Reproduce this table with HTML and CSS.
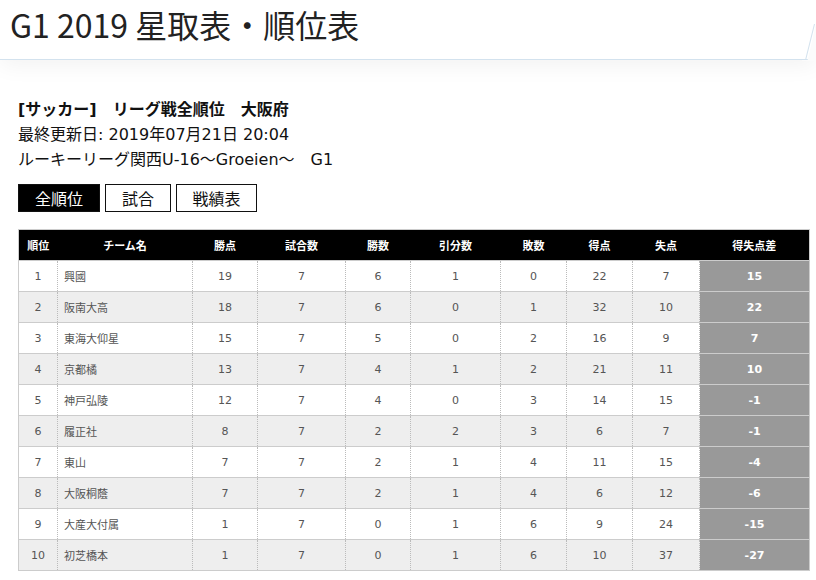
FILE: index.html
```html
<!DOCTYPE html>
<html lang="ja">
<head>
<meta charset="utf-8">
<title>G1 2019 星取表・順位表</title>
<link rel="stylesheet" href="styles.css">
</head>
<body>
<header class="page-header">
  <h1 class="page-title">G1 2019 星取表・順位表</h1>
  <svg class="header-slant" width="14" height="61" viewBox="0 0 14 61" aria-hidden="true">
    <polygon points="14,24 14,61 0,61 0,60 5.7,60" fill="#fbfbfb"/>
    <line x1="3.7" y1="59.5" x2="12.5" y2="24" stroke="#d3e2ee" stroke-width="1"/>
  </svg>
</header>
<main class="content">
  <div class="info">
    <p class="info-title">[サッカー]　リーグ戦全順位　大阪府</p>
    <p class="info-line">最終更新日: 2019年07月21日 20:04</p>
    <p class="info-line">ルーキーリーグ関西U-16～Groeien～　G1</p>
  </div>
  <nav class="tabs">
    <a class="tab tab-active">全順位</a>
    <a class="tab tab-game">試合</a>
    <a class="tab tab-record">戦績表</a>
  </nav>
  <table class="standings">
    <colgroup>
      <col class="c-rank"><col class="c-team"><col class="c-pts"><col class="c-games"><col class="c-win"><col class="c-draw"><col class="c-lose"><col class="c-gf"><col class="c-ga"><col class="c-gd">
    </colgroup>
    <thead>
      <tr><th>順位</th><th>チーム名</th><th>勝点</th><th>試合数</th><th>勝数</th><th>引分数</th><th>敗数</th><th>得点</th><th>失点</th><th>得失点差</th></tr>
    </thead>
    <tbody>
      <tr><td>1</td><td class="team">興國</td><td>19</td><td>7</td><td>6</td><td>1</td><td>0</td><td>22</td><td>7</td><td class="gd">15</td></tr>
      <tr><td>2</td><td class="team">阪南大高</td><td>18</td><td>7</td><td>6</td><td>0</td><td>1</td><td>32</td><td>10</td><td class="gd">22</td></tr>
      <tr><td>3</td><td class="team">東海大仰星</td><td>15</td><td>7</td><td>5</td><td>0</td><td>2</td><td>16</td><td>9</td><td class="gd">7</td></tr>
      <tr><td>4</td><td class="team">京都橘</td><td>13</td><td>7</td><td>4</td><td>1</td><td>2</td><td>21</td><td>11</td><td class="gd">10</td></tr>
      <tr><td>5</td><td class="team">神戸弘陵</td><td>12</td><td>7</td><td>4</td><td>0</td><td>3</td><td>14</td><td>15</td><td class="gd">-1</td></tr>
      <tr><td>6</td><td class="team">履正社</td><td>8</td><td>7</td><td>2</td><td>2</td><td>3</td><td>6</td><td>7</td><td class="gd">-1</td></tr>
      <tr><td>7</td><td class="team">東山</td><td>7</td><td>7</td><td>2</td><td>1</td><td>4</td><td>11</td><td>15</td><td class="gd">-4</td></tr>
      <tr><td>8</td><td class="team">大阪桐蔭</td><td>7</td><td>7</td><td>2</td><td>1</td><td>4</td><td>6</td><td>12</td><td class="gd">-6</td></tr>
      <tr><td>9</td><td class="team">大産大付属</td><td>1</td><td>7</td><td>0</td><td>1</td><td>6</td><td>9</td><td>24</td><td class="gd">-15</td></tr>
      <tr><td>10</td><td class="team">初芝橋本</td><td>1</td><td>7</td><td>0</td><td>1</td><td>6</td><td>10</td><td>37</td><td class="gd">-27</td></tr>
    </tbody>
  </table>
</main>
</body>
</html>
```
FILE: styles.css
```css
* { box-sizing: border-box; }
html, body {
  margin: 0;
  padding: 0;
  background: #ffffff;
  font-family: "Noto Sans CJK JP", "Noto Sans", sans-serif;
  color: #222;
}
.page-header {
  position: relative;
  height: 60px;
  background: #ffffff;
  border-bottom: 1px solid #d3e2ee;
  box-shadow: 0 6px 22px rgba(0, 0, 0, 0.05);
  padding: 0 10px;
  display: flex;
  align-items: center;
}
.page-title {
  margin: 0;
  font-size: 32px;
  font-weight: 400;
  color: #222;
  line-height: 1;
  padding-bottom: 12px;
}
.header-slant {
  position: absolute;
  right: 0;
  top: 0;
}
.content {
  padding: 37px 7px 0 18px;
}
.info p {
  margin: 0;
  font-family: "DejaVu Sans", "Noto Sans CJK JP", sans-serif;
  font-size: 16px;
  line-height: 25px;
  color: #111;
}
.info .info-title {
  font-weight: 700;
}
.tabs {
  display: flex;
  gap: 5px;
  margin-top: 12px;
}
.tab {
  display: flex;
  align-items: center;
  justify-content: center;
  height: 28px;
  font-size: 16px;
  color: #111;
  border: 1px solid #111;
  background: #fff;
}
.tab-active { width: 82px; background: #000; color: #fff; }
.tab-game { width: 66px; }
.tab-record { width: 81px; }
.standings {
  margin-top: 17px;
  width: 791px;
  table-layout: fixed;
  border-collapse: collapse;
  border: 1px solid #cccccc;
  font-family: "DejaVu Sans", "Noto Sans CJK JP", sans-serif;
}
.c-rank { width: 39px; }
.c-team { width: 135px; }
.c-pts { width: 65px; }
.c-games { width: 88px; }
.c-win { width: 65px; }
.c-draw { width: 90px; }
.c-lose { width: 66px; }
.c-gf { width: 66px; }
.c-ga { width: 67px; }
.c-gd { width: 110px; }
.standings th {
  background: #000;
  color: #fff;
  height: 31px;
  font-size: 11px;
  font-weight: 700;
  font-family: "Noto Sans CJK JP", sans-serif;
  padding: 0;
}
.standings td {
  height: 31px;
  font-size: 11px;
  color: #555;
  text-align: center;
  padding: 0;
  border-top: 1px solid #cccccc;
  border-left: 1px dotted #bbbbbb;
}
.standings td:first-child { border-left: none; }
.standings tbody tr:nth-child(even) td { background: #eeeeee; }
.standings td.team {
  text-align: left;
  padding-left: 6px;
  font-family: "Noto Sans CJK JP", sans-serif;
}
.standings tbody tr td.gd {
  background: #999999;
  color: #fff;
  font-weight: 700;
}
```
